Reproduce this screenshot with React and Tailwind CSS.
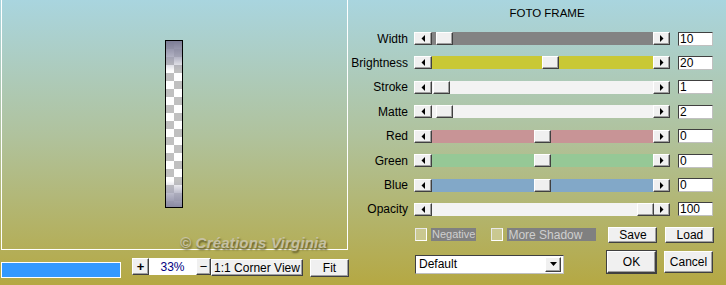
import React from "react";

const raised =
  "bg-[#f0f0f0] border border-t-white border-l-white border-r-[#404040] border-b-[#404040] shadow-[inset_-1px_-1px_0_#a0a0a0]";
const sunken =
  "bg-white border border-t-[#404040] border-l-[#404040] border-r-[#c0c0c0] border-b-[#c0c0c0]";

const sliders = [
  { label: "Width", track: "bg-[#838383]", thumb: 4, value: "10" },
  { label: "Brightness", track: "bg-[#c9c834]", thumb: 110, value: "20" },
  { label: "Stroke", track: "bg-[#f3f3f3]", thumb: 1, value: "1" },
  { label: "Matte", track: "bg-[#f3f3f3]", thumb: 4, value: "2" },
  { label: "Red", track: "bg-[#c89496]", thumb: 102, value: "0" },
  { label: "Green", track: "bg-[#96c896]", thumb: 102, value: "0" },
  { label: "Blue", track: "bg-[#82a8c8]", thumb: 102, value: "0" },
  { label: "Opacity", track: "bg-[#f3f3f3]", thumb: 205, value: "100" },
];

function Arrow({ dir }) {
  return (
    <svg width="4" height="7" viewBox="0 0 4 7">
      {dir === "left" ? (
        <polygon points="4,0 4,7 0.5,3.5" fill="#000" />
      ) : (
        <polygon points="0,0 0,7 3.5,3.5" fill="#000" />
      )}
    </svg>
  );
}

function SliderRow({ label, track, thumb, value }) {
  return (
    <div className="flex items-center h-[13px]">
      <div className="w-[48px] flex justify-end text-[12px] leading-none text-black whitespace-nowrap">
        {label}
      </div>
      <div className="ml-[6px] w-[256px] h-[13px] flex">
        <div className={`${raised} w-[18px] h-[13px] flex items-center justify-center`}>
          <Arrow dir="left" />
        </div>
        <div className={`relative flex-1 h-[13px] ${track}`}>
          <div
            className={`${raised} absolute top-0 w-[17px] h-[13px]`}
            style={{ left: thumb }}
          />
        </div>
        <div className={`${raised} w-[17px] h-[13px] flex items-center justify-center`}>
          <Arrow dir="right" />
        </div>
      </div>
      <div className={`${sunken} ml-[8px] w-[35px] h-[14px] flex items-center pl-[1px] text-[12px] leading-none text-black`}>
        {value}
      </div>
    </div>
  );
}

function Checker() {
  const cells = Array.from({ length: 42 });
  return (
    <div className="relative w-[18px] h-[168px] border border-black overflow-hidden">
      <div className="grid grid-cols-2">
        {cells.map((_, i) => {
          const row = Math.floor(i / 2);
          const col = i % 2;
          const gray = (row + col) % 2 === 0;
          return (
            <div
              key={i}
              className={gray ? "w-[8px] h-[8px] bg-[#c0c0c0]" : "w-[8px] h-[8px] bg-white"}
            />
          );
        })}
      </div>
      <div className="absolute left-0 top-0 w-full h-[30px] bg-gradient-to-b from-[#7d7d96] via-[#9a9ab0]/80 to-transparent" />
      <div className="absolute left-0 bottom-0 w-full h-[26px] bg-gradient-to-t from-[#8a8aa2] via-[#a6a6ba]/80 to-transparent" />
    </div>
  );
}

export default function App() {
  return (
    <div className="relative w-[726px] h-[285px] overflow-hidden flex font-['Liberation_Sans',Arial,sans-serif] bg-[linear-gradient(to_bottom,#a9d5df,#b0c29c_48%,#b5a843)]">
      {/* left: preview */}
      <div className="w-[360px] flex flex-col">
        <div className="ml-[1px] w-[347px] h-[250px] border-l border-r border-b border-white pt-[40px] pl-[163px]">
          <Checker />
        </div>
        <div className="flex items-start">
          <div className="ml-[1px] mt-[12px] w-[120px] h-[16px] bg-[#3399ff] border border-white" />
          <div className={`${raised} ml-[11px] mt-[8px] w-[17px] h-[17px] flex items-center justify-center text-[13px] leading-none font-bold text-black`}>
            +
          </div>
          <div className="mt-[8px] w-[47px] h-[17px] bg-white flex items-center justify-center text-[12px] leading-none text-[#000080]">
            33%
          </div>
          <div className={`${raised} mt-[8px] w-[15px] h-[17px] flex items-center justify-center text-[13px] leading-none text-black`}>
            −
          </div>
          <div className={`${raised} mt-[9px] w-[92px] h-[17px] flex items-center justify-center text-[12px] leading-none text-black whitespace-nowrap`}>
            1:1 Corner View
          </div>
          <div className={`${raised} ml-[7px] mt-[9px] w-[39px] h-[18px] flex items-center justify-center text-[12px] leading-none text-black`}>
            Fit
          </div>
        </div>
      </div>

      {/* watermark */}
      <div className="absolute left-[180px] top-[235px] text-[15px] font-bold italic leading-none tracking-[0.2px] text-[#c6c1a3] whitespace-nowrap [text-shadow:1px_2px_2px_#5f5a2a]">
        © Créations Virginia
      </div>

      {/* right: controls */}
      <div className="w-[366px] flex flex-col">
        <div className="h-[32px] pt-[8px] pl-[8px] text-center text-[11.5px] leading-none text-black">
          FOTO FRAME
        </div>
        <div className="flex flex-col gap-[11.43px]">
          {sliders.map((s) => (
            <SliderRow key={s.label} {...s} />
          ))}
        </div>

        <div className="mt-[11px] h-[16px] flex items-center">
          <div className="ml-[55px] w-[12px] h-[13px] border border-t-[#e8e8e8] border-l-[#e8e8e8] border-r-white border-b-white bg-white/30" />
          <div className="ml-[4px] h-[13px] bg-[#808080] text-[#cfcfcf] text-[11px] leading-none flex items-center px-[1px] whitespace-nowrap">
            Negative
          </div>
          <div className="ml-[15px] w-[12px] h-[13px] border border-t-[#e8e8e8] border-l-[#e8e8e8] border-r-white border-b-white bg-white/30" />
          <div className="ml-[4px] w-[89px] h-[13px] bg-[#808080] text-[#cfcfcf] text-[12px] leading-none flex items-center pl-[1px] whitespace-nowrap">
            More Shadow
          </div>
          <div className={`${raised} ml-[12px] w-[49px] h-[16px] flex items-center justify-center text-[12px] leading-none text-black`}>
            Save
          </div>
          <div className={`${raised} ml-[8px] w-[49px] h-[16px] flex items-center justify-center text-[12px] leading-none text-black`}>
            Load
          </div>
        </div>

        <div className="mt-[8px] flex items-start">
          <div className={`${sunken} ml-[55px] mt-[4px] w-[149px] h-[19px] flex items-center justify-between pl-[3px] pr-[2px]`}>
            <span className="text-[12px] leading-none text-black">Default</span>
            <div className={`${raised} w-[16px] h-[15px] flex items-center justify-center`}>
              <svg width="7" height="4" viewBox="0 0 7 4">
                <polygon points="0,0 7,0 3.5,4" fill="#000" />
              </svg>
            </div>
          </div>
          <div className={`${raised} ml-[43px] w-[49px] h-[22px] flex items-center justify-center text-[12px] leading-none text-black outline outline-1 outline-[#404040]`}>
            OK
          </div>
          <div className={`${raised} ml-[8px] w-[49px] h-[22px] flex items-center justify-center text-[12px] leading-none text-black`}>
            Cancel
          </div>
        </div>
      </div>
    </div>
  );
}
